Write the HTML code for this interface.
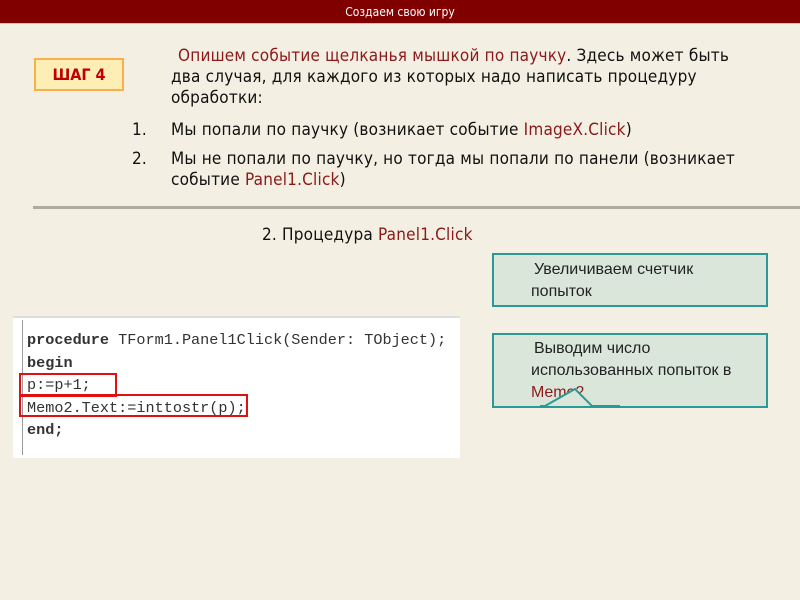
<!DOCTYPE html>
<html><head><meta charset="utf-8"><style>
body{margin:0;width:800px;height:600px;background:#f3efe2;position:relative;overflow:hidden;font-family:"DejaVu Sans Condensed","Liberation Sans",sans-serif;color:#111}
.hdr{position:absolute;left:0;top:0;width:800px;height:23px;background:#800000;color:#fff;font-size:12px;text-align:center;line-height:24px}
.hdr2{position:absolute;left:0;top:23px;width:800px;height:1px;background:#e8b9a0}
.t{position:absolute;font-size:17px;letter-spacing:0.2px;line-height:20px;white-space:nowrap}
.r{color:#8b1a1a}
.step{position:absolute;left:34px;top:58px;width:86px;height:29px;border:2px solid #f7b04a;background:#fdeeb5;color:#c00000;font-weight:bold;font-size:16px;text-align:center;line-height:29px}
.line{position:absolute;left:33px;top:206px;width:767px;height:3px;background:#b0aba0}
.code{position:absolute;left:13px;top:316px;width:447px;height:140px;background:#fff;border-top:2px solid #ddd}
.code pre{margin:0;position:absolute;left:14px;top:11px;font-family:"Liberation Mono",monospace;font-size:15.2px;line-height:22.6px;color:#333}
.box{position:absolute;background:#dbe6db;border:2px solid #2a9a98;font-size:16px;line-height:22px;color:#222;font-family:"Liberation Sans",sans-serif}
.redb{position:absolute;border:2px solid #e01010}
</style></head><body>
<div class="hdr">Создаем свою игру</div><div class="hdr2"></div>
<div class="step">ШАГ 4</div>
<div class="t" style="left:178px;top:46px"><span class="r">Опишем событие щелканья мышкой по паучку</span>. Здесь может быть</div>
<div class="t" style="left:171px;top:67px">два случая, для каждого из которых надо написать процедуру</div>
<div class="t" style="left:171px;top:88px">обработки:</div>
<div class="t" style="left:132px;top:120px">1.</div>
<div class="t" style="left:171px;top:120px">Мы попали по паучку (возникает событие <span class="r">ImageX.Click</span>)</div>
<div class="t" style="left:132px;top:149px">2.</div>
<div class="t" style="left:171px;top:149px">Мы не попали по паучку, но тогда мы попали по панели (возникает</div>
<div class="t" style="left:171px;top:170px">событие <span class="r">Panel1.Click</span>)</div>
<div class="line"></div>
<div class="t" style="left:262px;top:225px">2. Процедура <span class="r">Panel1.Click</span></div>
<div class="code"><pre><b>procedure</b> TForm1.Panel1Click(Sender: TObject);
<b>begin</b>
p:=p+1;
Memo2.Text:=inttostr(p);
<b>end;</b></pre></div>
<div style="position:absolute;left:22px;top:320px;width:1px;height:135px;background:#999"></div>
<div class="redb" style="left:19px;top:373px;width:94px;height:20px"></div>
<div class="redb" style="left:19px;top:394px;width:225px;height:19px"></div>
<div class="box" style="left:492px;top:253px;width:272px;height:50px"><div style="padding:4px 0 0 40px">Увеличиваем счетчик<br><span style="margin-left:-3px">попыток</span></div></div>
<div class="box" style="left:492px;top:333px;width:272px;height:71px"><div style="padding:3px 0 0 40px">Выводим число<br><span style="margin-left:-3px">использованных попыток в</span><br><span class="r" style="margin-left:-3px">Memo2</span></div></div>
<svg style="position:absolute;left:540px;top:380px" width="90" height="30"><polyline points="0,26 5,26 35,9 52,26 80,26" fill="#dbe6db" stroke="#2a9a98" stroke-width="2"/></svg>
</body></html>
